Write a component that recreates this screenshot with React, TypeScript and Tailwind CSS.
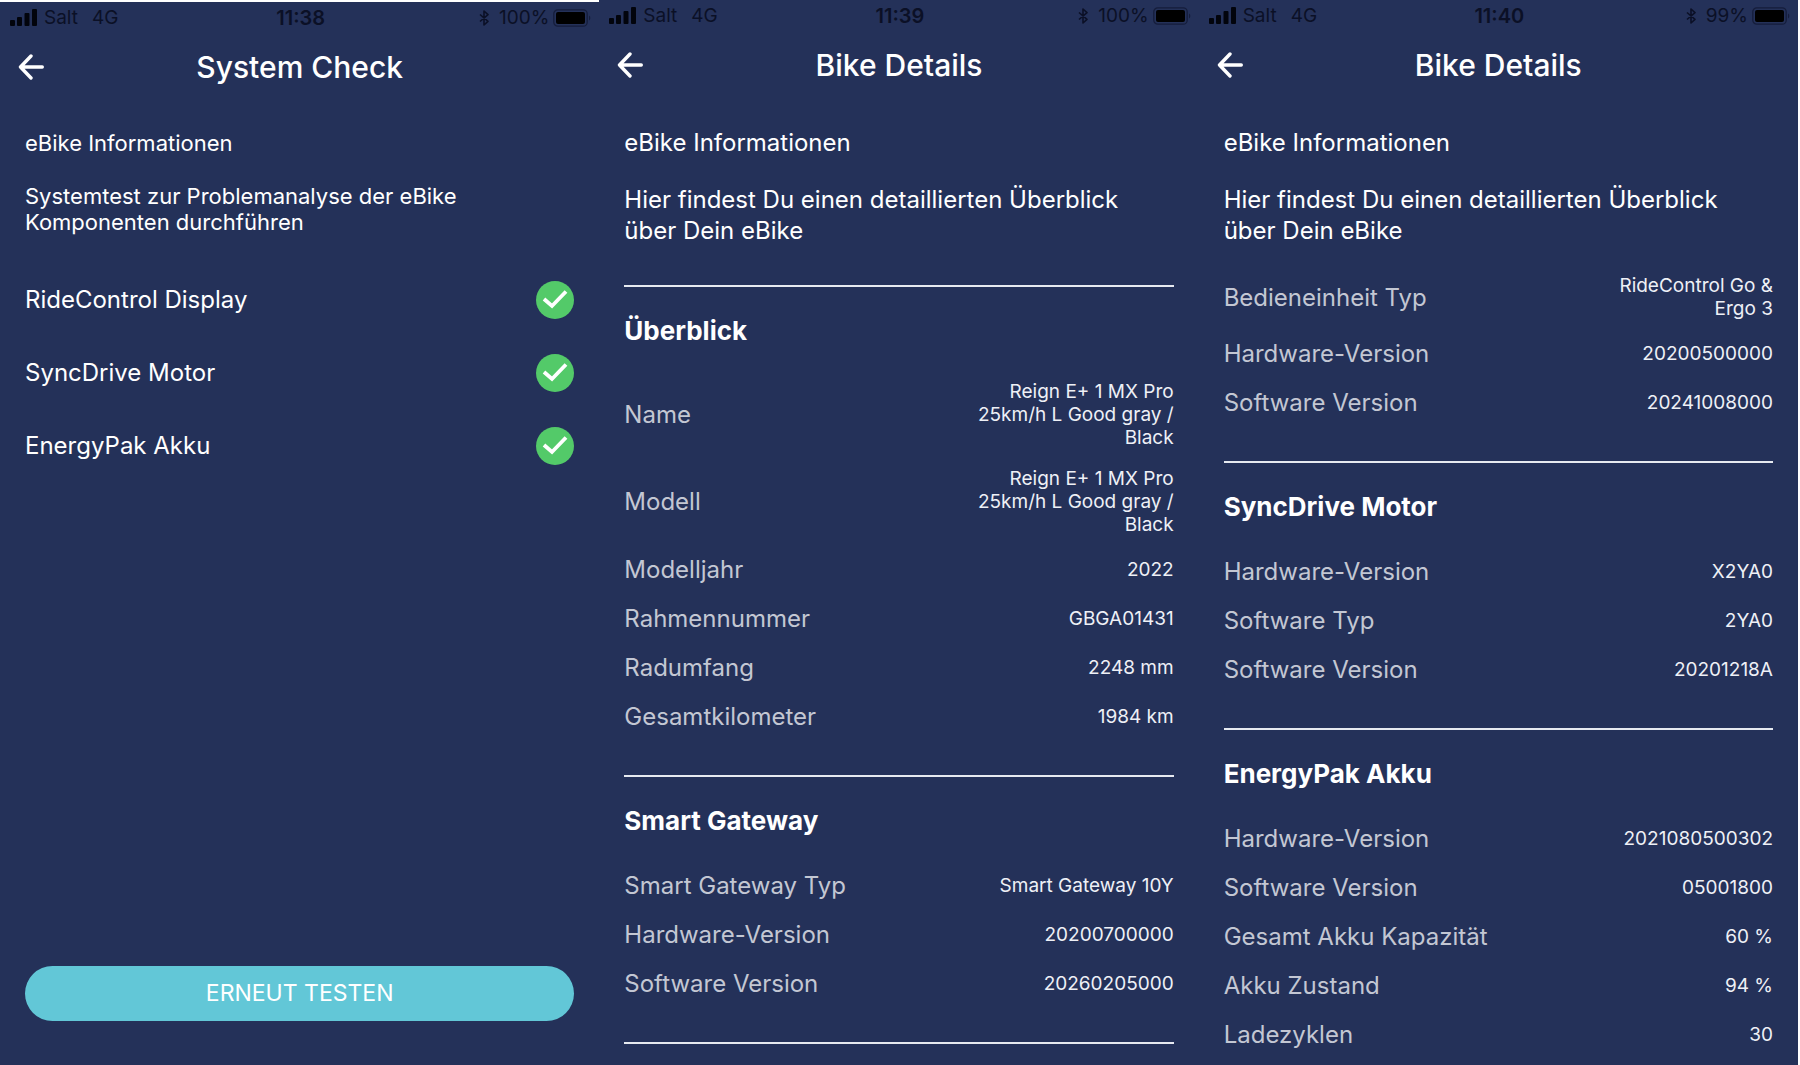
import type { ReactNode } from 'react';

type Detail = { label: string; value: string };

const checks = ['RideControl Display', 'SyncDrive Motor', 'EnergyPak Akku'];

const overview: Detail[] = [
    { label: 'Name', value: 'Reign E+ 1 MX Pro 25km/h L Good gray / Black' },
    { label: 'Modell', value: 'Reign E+ 1 MX Pro 25km/h L Good gray / Black' },
    { label: 'Modelljahr', value: '2022' },
    { label: 'Rahmennummer', value: 'GBGA01431' },
    { label: 'Radumfang', value: '2248 mm' },
    { label: 'Gesamtkilometer', value: '1984 km' },
];

const gateway: Detail[] = [
    { label: 'Smart Gateway Typ', value: 'Smart Gateway 10Y' },
    { label: 'Hardware-Version', value: '20200700000' },
    { label: 'Software Version', value: '20260205000' },
];

const controlUnit: Detail[] = [
    { label: 'Bedieneinheit Typ', value: 'RideControl Go & Ergo 3' },
    { label: 'Hardware-Version', value: '20200500000' },
    { label: 'Software Version', value: '20241008000' },
];

const motor: Detail[] = [
    { label: 'Hardware-Version', value: 'X2YA0' },
    { label: 'Software Typ', value: '2YA0' },
    { label: 'Software Version', value: '20201218A' },
];

const battery: Detail[] = [
    { label: 'Hardware-Version', value: '2021080500302' },
    { label: 'Software Version', value: '05001800' },
    { label: 'Gesamt Akku Kapazität', value: '60 %' },
    { label: 'Akku Zustand', value: '94 %' },
    { label: 'Ladezyklen', value: '30' },
];

function StatusBar({ time, charge }: { time: string; charge: string }) {
    return (
        <div className="grid h-8 grid-cols-3 items-center pr-2 pl-[10px] text-[19px] text-[#0b1026]">
            <div className="flex items-center">
                <svg width="28" height="18" viewBox="0 0 28 18" fill="#02040c" aria-hidden="true">
                    <rect x="0" y="11" width="5" height="6" rx="1" />
                    <rect x="7" y="8" width="5" height="9" rx="1" />
                    <rect x="14.500" y="4" width="5" height="13" rx="1" />
                    <rect x="22" y="0" width="5" height="17" rx="1" />
                </svg>
                <span className="ml-1.5">Salt</span>
                <span className="ml-3.5">4G</span>
            </div>
            <span className="text-center text-xl font-semibold">{time}</span>
            <div className="flex items-center justify-end">
                <svg width="10" height="16" viewBox="0 0 10 16" fill="none" stroke="#0b1026" strokeWidth="1.600" strokeLinejoin="round" aria-hidden="true">
                    <path d="M1 4.500L9 11.300L5 15V1L9 4.700L1 11.500" />
                </svg>
                <span className="ml-2.5">{charge}</span>
                <svg className="ml-1" width="38" height="18" viewBox="0 0 38 18" aria-hidden="true">
                    <rect x="0.800" y="0.800" width="33.400" height="16.400" rx="4" fill="none" stroke="#151d3b" strokeWidth="1.300" />
                    <rect x="3" y="3" width="29" height="12" rx="2" fill="#000" />
                    <path d="M36 6.500C37.700 7.300 37.700 10.700 36 11.500Z" fill="#151d3b" />
                </svg>
            </div>
        </div>
    );
}

function Screen({ title, time, charge, className = '', children }: {
    title: string;
    time: string;
    charge: string;
    className?: string;
    children: ReactNode;
}) {
    return (
        <section className={`flex min-w-0 flex-1 flex-col bg-[#243159] ${className}`}>
            <StatusBar time={time} charge={charge} />
            <header className="grid h-[66px] grid-cols-[26px_1fr_26px] items-center px-[18px]">
                <button type="button" aria-label="Zurück">
                    <svg width="26" height="26" viewBox="0 0 26 26" fill="none" stroke="#fff" strokeWidth="3.400" strokeLinecap="round" strokeLinejoin="round" aria-hidden="true">
                        <path d="M13 2L2.500 13L13 24M3 13H24.300" />
                    </svg>
                </button>
                <h1 className="text-center text-[30px] leading-9 font-medium">{title}</h1>
            </header>
            <div className="flex flex-1 flex-col px-[25px]">{children}</div>
        </section>
    );
}

function DetailsIntro() {
    return (
        <>
            <h2 className="mt-[30px] text-2xl leading-[30px]">eBike Informationen</h2>
            <p className="mt-[26px] text-2xl leading-[31px]">
                Hier findest Du einen detaillierten Überblick über Dein eBike
            </p>
        </>
    );
}

function DetailList({ items }: { items: Detail[] }) {
    return (
        <dl>
            {items.map((item) => (
                <div key={item.label} className="flex items-center justify-between py-[9px]">
                    <dt className="text-2xl leading-[31px] text-[#c3c7d3]">{item.label}</dt>
                    <dd className="max-w-[198px] text-right text-[19px] leading-[23px] text-[#eef0f6]">{item.value}</dd>
                </div>
            ))}
        </dl>
    );
}

function DetailSection({ title, items }: { title: string; items: Detail[] }) {
    return (
        <section className="mb-[34px] border-t-2 border-[#e6e9f0] pt-7">
            <h2 className="mb-6 text-[26px] leading-8 font-bold">{title}</h2>
            <DetailList items={items} />
        </section>
    );
}

export default function App() {
    return (
        <main className="flex min-h-screen bg-white pr-0.5 font-[Inter,'Liberation_Sans',sans-serif] text-white">
            <Screen title="System Check" time="11:38" charge="100%" className="border-t-2 border-white">
                <h2 className="mt-[30px] text-[22px] leading-[26px]">eBike Informationen</h2>
                <p className="mt-[27px] text-[22px] leading-[26px]">
                    Systemtest zur Problemanalyse der eBike Komponenten durchführen
                </p>
                <ul className="mt-[46px] flex flex-col gap-[35px]">
                    {checks.map((name) => (
                        <li key={name} className="flex items-center justify-between text-2xl">
                            {name}
                            <svg width="38" height="38" viewBox="0 0 38 38" role="img" aria-label="OK">
                                <circle cx="19" cy="19" r="19" fill="#53ca69" />
                                <path d="M8 18L16 25L30 10.500" fill="none" stroke="#fff" strokeWidth="3.800" />
                            </svg>
                        </li>
                    ))}
                </ul>
                <button type="button" className="mt-auto mb-11 h-[55px] rounded-full bg-[#62c7d7] text-[23px]">
                    ERNEUT TESTEN
                </button>
            </Screen>

            <Screen title="Bike Details" time="11:39" charge="100%">
                <DetailsIntro />
                <div className="mt-[39px]">
                    <DetailSection title="Überblick" items={overview} />
                    <DetailSection title="Smart Gateway" items={gateway} />
                    <hr className="border-t-2 border-[#e6e9f0]" />
                </div>
            </Screen>

            <Screen title="Bike Details" time="11:40" charge="99%">
                <DetailsIntro />
                <div className="mt-[19px] mb-[34px]">
                    <DetailList items={controlUnit} />
                </div>
                <DetailSection title="SyncDrive Motor" items={motor} />
                <section className="border-t-2 border-[#e6e9f0] pt-7">
                    <h2 className="mb-6 text-[26px] leading-8 font-bold">EnergyPak Akku</h2>
                    <DetailList items={battery} />
                </section>
            </Screen>
        </main>
    );
}
